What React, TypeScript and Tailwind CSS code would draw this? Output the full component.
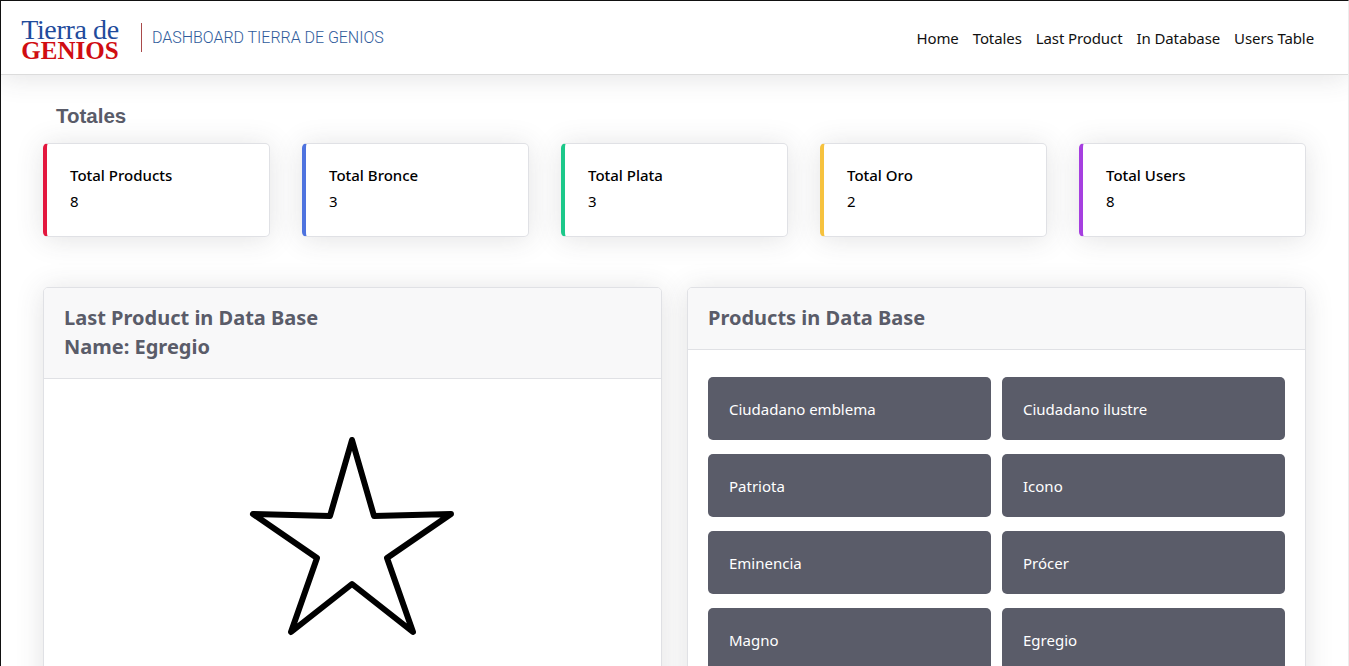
const totals = [
  { label: "Total Products", value: 8, border: "border-l-[#e3173e]" },
  { label: "Total Bronce", value: 3, border: "border-l-[#4e73df]" },
  { label: "Total Plata", value: 3, border: "border-l-[#1cc88a]" },
  { label: "Total Oro", value: 2, border: "border-l-[#f6c23e]" },
  { label: "Total Users", value: 8, border: "border-l-[#a63fe0]" },
];

const products = [
  "Ciudadano emblema",
  "Ciudadano ilustre",
  "Patriota",
  "Icono",
  "Eminencia",
  "Prócer",
  "Magno",
  "Egregio",
];

const links = ["Home", "Totales", "Last Product", "In Database", "Users Table"];

const Navbar = () => (
  <nav className="relative flex h-[74px] items-center justify-between border-b border-[#dcdcdc] bg-white pl-[20px] pr-[34px] shadow-[0_2px_28px_0_rgba(58,59,69,0.15)]">
    <div className="flex items-center">
      <div className="flex w-[98px] flex-col items-center pt-[3px] font-['Liberation_Serif',serif]">
        <span className="text-[28px] leading-[22px] tracking-[-0.35px] text-[#1f4b9c]">Tierra de</span>
        <span className="text-[25px] leading-[19px] font-bold tracking-[0px] text-[#d00d12]">GENIOS</span>
      </div>
      <div className="ml-[22px] h-[29px] w-px bg-[#a94a4a]" />
      <span className="ml-[10px] font-['Roboto',sans-serif] text-[16px] font-light tracking-[-0.03px] text-[#2f5b9b]">
        DASHBOARD TIERRA DE GENIOS
      </span>
    </div>
    <ul className="flex gap-[14px] pt-[2px] text-[15px] tracking-[-0.1px] text-[#111]">
      {links.map((link) => (
        <li key={link}>{link}</li>
      ))}
    </ul>
  </nav>
);

const TotalCard = ({ label, value, border }: { label: string; value: number; border: string }) => (
  <div className={`flex h-[94px] flex-col justify-center rounded-[5px] border border-[#e0e1e5] border-l-4 bg-white pb-[4px] pl-[23px] text-[15px] leading-[26px] text-black shadow-[0_2px_28px_0_rgba(58,59,69,0.15)] ${border}`}>
    <span className="font-medium">{label}</span>
    <span>{value}</span>
  </div>
);

const Panel = ({ title, children }: { title: React.ReactNode; children: React.ReactNode }) => (
  <div className="overflow-hidden rounded-[5px] border border-[#e0e1e5] bg-white shadow-[0_2px_28px_0_rgba(58,59,69,0.15)]">
    <div className="border-b border-[#e0e1e5] bg-[#f8f8f9] px-5 pt-[15px] pb-[17px] text-[20px] leading-[29px] font-bold text-[#5a5c69]">
      {title}
    </div>
    {children}
  </div>
);

export default function App() {
  return (
    <div className="h-[666px] overflow-hidden border-t border-r border-l border-t-[#111] border-r-[#ececec] border-l-[#111] bg-white font-['Noto_Sans','Open_Sans',sans-serif]">
      <Navbar />
      <main className="pl-[42px] pr-[42px] pt-[27px]">
        <h2 className="pl-[13px] font-['Liberation_Sans',sans-serif] text-[20.5px] leading-[28px] font-bold text-[#5a5c69]">
          Totales
        </h2>
        <div className="mt-[13px] grid grid-cols-5 gap-8">
          {totals.map((t) => (
            <TotalCard key={t.label} {...t} />
          ))}
        </div>
        <div className="mt-[50px] grid grid-cols-2 items-start gap-[25px]">
          <Panel
            title={
              <>
                Last Product in Data Base
                <br />
                Name: Egregio
              </>
            }
          >
            <div className="flex h-[400px] justify-center pt-[57px]">
              <svg width="210" height="200" viewBox="0 0 210 200" fill="none" stroke="#000" strokeWidth="6" strokeLinejoin="round">
                <path d="M104 4 L126 80 L203 78 L139 122 L165 196 L104 148 L43 196 L69 122 L5 78 L82 80 Z" />
              </svg>
            </div>
          </Panel>
          <Panel title="Products in Data Base">
            <div className="grid grid-cols-2 gap-x-[11px] gap-y-[14px] px-5 pt-[27px] pb-6">
              {products.map((name) => (
                <div key={name} className="flex h-[63px] items-center rounded-[5px] bg-[#5a5c69] pl-[21px] pt-[1px] text-[15px] text-white">
                  {name}
                </div>
              ))}
            </div>
          </Panel>
        </div>
      </main>
    </div>
  );
}
